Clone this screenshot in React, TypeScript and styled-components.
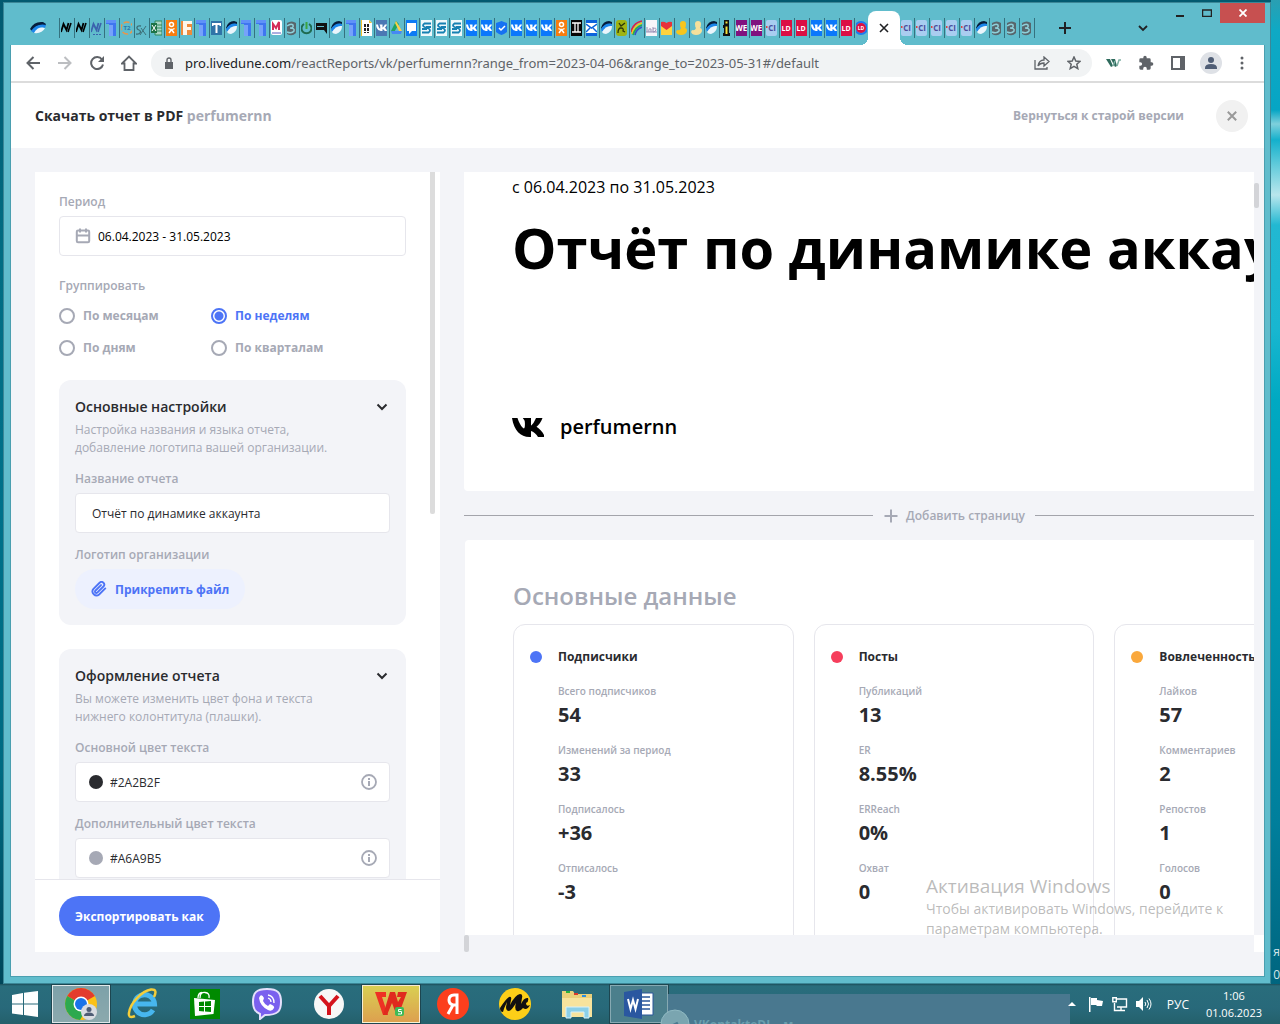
import React from 'react';
import styled, { createGlobalStyle } from 'styled-components';

const ui = "'Open Sans', 'Noto Sans', sans-serif";
const muted = '#a6a9b5';
const accent = '#4d74f6';
const ink = '#2a2b2f';
const line = '#e6e6ec';
const surface = '#f3f4f8';

const Global = createGlobalStyle`
  * { box-sizing: border-box; }
  body { margin: 0; font-family: ${ui}; font-size: 12px; color: ${ink}; }
  button, input { font: inherit; color: inherit; margin: 0; }
  button { border: 0; padding: 0; background: none; cursor: pointer; }
  h1, h2, h3, p, dl, dd, fieldset, legend { margin: 0; padding: 0; border: 0; font-weight: inherit; }
  svg { display: block; flex: none; }
`;

const Desktop = styled.div`
  position: relative;
  height: 100vh;
  display: flex;
  flex-direction: column;
  overflow: hidden;
  background:
    linear-gradient(180deg, #2a9fb2 0, #0fa9c4 30px, #06a5c4 110px, #7fd0dc 124px, #14b0cc 140px, #62cbdb 165px, #b9e6ec 195px, #22b8d2 225px, #18b6d0 330px, #00a9c2 400px, #009fb9 50%, #007f9c 80%, #005f78 100%) right / 9px 100% no-repeat,
    linear-gradient(180deg, #025a70 0, #026d83 25%, #00718a 50%, #006b82 75%, #003f52 100%);
`;

const Window = styled.div`
  flex: 1;
  min-height: 0;
  margin: 2px 9px 0 3px;
  display: flex;
  flex-direction: column;
  border: 1px solid #3b8797;
  background: #60bccc;
`;

const TitleBar = styled.div`
  display: flex;
  height: 42px;
  padding-right: 5px;
`;

const TabStrip = styled.div`
  flex: 1;
  min-width: 0;
  display: flex;
  padding: 8px 0 0 26px;
`;

const PinnedTab = styled.span`
  width: 29px;
  padding-top: 9px;
`;

const Tab = styled.span<{ $end?: boolean }>`
  width: 15px;
  height: 20px;
  margin-top: 7px;
  padding: 2px 1px;
  border-left: ${(p) => (p.$end ? 0 : 1)}px solid #35727f;
  border-right: ${(p) => (p.$end ? 1 : 0)}px solid #35727f;
`;

const ActiveTab = styled.button`
  position: relative;
  width: 32px;
  height: 34px;
  margin-left: -1px;
  display: grid;
  place-items: center;
  border-radius: 8px 8px 0 0;
  background: #fff;
  &::before, &::after {
    content: '';
    position: absolute;
    bottom: 0;
    width: 8px;
    height: 8px;
  }
  &::before { right: 100%; background: radial-gradient(circle at 0 0, transparent 8px, #fff 8px); }
  &::after { left: 100%; background: radial-gradient(circle at 100% 0, transparent 8px, #fff 8px); }
`;

const StripButton = styled.button<{ $gap: number }>`
  width: 20px;
  height: 20px;
  margin: 7px 0 0 ${(p) => p.$gap}px;
  display: grid;
  place-items: center;
`;

const WindowButton = styled.button<{ $wide?: boolean; $red?: boolean }>`
  width: ${(p) => (p.$wide ? 45 : 27)}px;
  height: 20px;
  display: grid;
  place-items: center;
  background: ${(p) => (p.$red ? '#c75050' : 'transparent')};
`;

const Client = styled.div`
  flex: 1;
  min-height: 0;
  margin: 0 5px 6px 6px;
  border: solid #4a9fb0;
  border-width: 0 1px 1px;
  display: flex;
  flex-direction: column;
  background: ${surface};
`;

const Toolbar = styled.div`
  height: 38px;
  display: flex;
  align-items: center;
  padding: 0 12px;
  border-bottom: 2px solid #dcdcdc;
  background: #fff;
`;

const ToolButton = styled.button`
  width: 20px;
  height: 28px;
  margin-right: 12px;
  display: grid;
  place-items: center;
  &:last-child { margin-right: 0; }
`;

const Omnibox = styled.div`
  flex: 1;
  min-width: 0;
  height: 28px;
  margin-right: 12px;
  padding: 0 8px 0 12px;
  display: flex;
  align-items: center;
  border-radius: 14px;
  background: #f1f3f4;
`;

const Address = styled.div`
  flex: 1;
  min-width: 0;
  margin-left: 10px;
  overflow: hidden;
  white-space: nowrap;
  font: 13px/20px 'Noto Sans', sans-serif;
  color: #5f6368;
  b { font-weight: 400; color: #202124; }
`;

const OmniButton = styled.button`
  width: 20px;
  height: 20px;
  margin-left: 12px;
  display: grid;
  place-items: center;
`;

const PageHeader = styled.header`
  height: 65px;
  padding: 0 16px 0 24px;
  display: flex;
  align-items: center;
  background: #fff;
`;

const PageTitle = styled.h1`
  flex: 1;
  font-size: 14px;
  line-height: 20px;
  font-weight: 700;
  span { color: ${muted}; }
`;

const OldVersion = styled.a`
  font-weight: 700;
  color: ${muted};
  text-decoration: none;
`;

const CloseButton = styled.button`
  width: 32px;
  height: 32px;
  margin-left: 32px;
  display: grid;
  place-items: center;
  border-radius: 50%;
  background: #f1f1f1;
`;

const Workspace = styled.main`
  flex: 1;
  min-height: 0;
  display: grid;
  grid-template-columns: 405px minmax(0, 1fr);
  gap: 24px;
  padding: 24px 0 24px 24px;
`;

const Sidebar = styled.aside`
  min-height: 0;
  display: flex;
  flex-direction: column;
  background: #fff;
`;

const SidebarScroll = styled.div`
  flex: 1;
  min-height: 0;
  display: flex;
  justify-content: space-between;
  overflow: hidden;
`;

const Settings = styled.form`
  flex: 1;
  padding: 22px 24px 0;
`;

const SideTrack = styled.div`
  width: 10px;
`;

const SideThumb = styled.div`
  width: 5px;
  height: 342px;
  border-radius: 0 0 2px 2px;
  background: #dcdcdc;
`;

const Label = styled.label`
  display: block;
  margin-bottom: 6px;
  line-height: 16px;
  font-weight: 600;
  color: ${muted};
`;

const Field = styled.div<{ $pad: number }>`
  height: 40px;
  padding: 0 12px 0 ${(p) => p.$pad}px;
  display: flex;
  align-items: center;
  gap: 7px;
  border: 1px solid ${line};
  border-radius: 4px;
  background: #fff;
  input {
    flex: 1;
    min-width: 0;
    padding: 0;
    border: 0;
    outline: 0;
    background: none;
  }
`;

const DateField = styled(Field)`
  color: #000;
`;

const Grouping = styled.fieldset`
  margin-top: 22px;
  legend {
    line-height: 16px;
    font-weight: 600;
    color: ${muted};
  }
`;

const RadioGrid = styled.div`
  display: grid;
  grid-template-columns: 152px 1fr;
  row-gap: 16px;
  margin: 14px 0 24px;
`;

const Radio = styled.label`
  display: flex;
  align-items: center;
  gap: 8px;
  line-height: 16px;
  font-weight: 700;
  color: ${muted};
  input {
    appearance: none;
    width: 16px;
    height: 16px;
    border: 2px solid ${muted};
    border-radius: 50%;
  }
  input:checked {
    border-color: ${accent};
    background: radial-gradient(circle, ${accent} 4px, transparent 5px);
  }
  &:has(input:checked) { color: ${accent}; }
`;

const Group = styled.section`
  margin-bottom: 24px;
  padding: 16px;
  border-radius: 12px;
  background: ${surface};
`;

const GroupHead = styled.div`
  display: flex;
  align-items: center;
  justify-content: space-between;
  h2 {
    font-size: 14px;
    line-height: 22px;
    font-weight: 600;
  }
  button {
    width: 16px;
    height: 16px;
    display: grid;
    place-items: center;
  }
`;

const Hint = styled.p`
  max-width: 280px;
  margin: 3px 0 14px;
  line-height: 18px;
  color: ${muted};
`;

const GroupField = styled.div`
  & + & { margin-top: 14px; }
`;

const Swatch = styled.span<{ $color: string }>`
  width: 14px;
  height: 14px;
  border-radius: 50%;
  background: ${(p) => p.$color};
`;

const InfoButton = styled.button`
  width: 16px;
  height: 16px;
`;

const AttachButton = styled.button`
  height: 40px;
  padding: 0 16px;
  display: flex;
  align-items: center;
  gap: 8px;
  border-radius: 20px;
  background: #edf1fe;
  font-weight: 700;
  color: ${accent};
`;

const SidebarFooter = styled.div`
  height: 73px;
  padding: 16px 24px;
  border-top: 1px solid ${line};
`;

const ExportButton = styled.button`
  height: 40px;
  padding: 0 16px;
  border-radius: 20px;
  background: ${accent};
  font-weight: 700;
  color: #fff;
`;

const Preview = styled.section`
  min-height: 0;
  display: grid;
  grid-template: minmax(0, 1fr) 17px / minmax(0, 1fr) 10px;
`;

const Sheets = styled.div`
  overflow: hidden;
`;

const VTrack = styled.div`
  padding-top: 11px;
  &::before {
    content: '';
    display: block;
    width: 5px;
    height: 25px;
    border-radius: 2px;
    background: #d3d4d8;
  }
`;

const HTrack = styled.div`
  &::before {
    content: '';
    display: block;
    width: 5px;
    height: 17px;
    border-radius: 2px;
    background: #d3d4d8;
  }
`;

const Corner = styled.div`
  background: #fff;
`;

const Cover = styled.article`
  width: 980px;
  height: 319px;
  padding: 3px 48px 48px;
  display: flex;
  flex-direction: column;
  border-radius: 0 0 4px 4px;
  background: #fff;
  color: #000;
`;

const CoverPeriod = styled.p`
  font-size: 16px;
  line-height: 24px;
`;

const CoverTitle = styled.h2`
  margin-top: 10px;
  font-size: 56px;
  line-height: 76px;
  font-weight: 700;
  white-space: nowrap;
`;

const CoverAccount = styled.div`
  margin-top: auto;
  display: flex;
  align-items: center;
  gap: 16px;
  font-size: 20px;
  line-height: 32px;
  font-weight: 600;
`;

const AddPage = styled.button`
  width: 980px;
  height: 49px;
  display: flex;
  align-items: center;
  gap: 10px;
  font-weight: 600;
  color: ${muted};
  &::before, &::after {
    content: '';
    flex: 1;
    height: 1px;
    background: #a3a4ab;
  }
  span { display: flex; align-items: center; gap: 7px; }
`;

const Sheet = styled.article`
  width: 980px;
  margin-left: 1px;
  padding: 40px 50px 48px 48px;
  border-radius: 4px;
  background: #fff;
`;

const SheetTitle = styled.h2`
  margin-bottom: 12px;
  font-size: 24px;
  line-height: 32px;
  font-weight: 600;
  color: ${muted};
`;

const Cards = styled.div`
  display: grid;
  grid-template-columns: repeat(3, 1fr);
  gap: 20px;
`;

const Card = styled.section`
  padding: 23px 16px 40px;
  border: 1px solid ${line};
  border-radius: 12px;
`;

const CardTitle = styled.h3<{ $dot: string }>`
  display: flex;
  align-items: center;
  gap: 16px;
  font-size: 12px;
  line-height: 18px;
  font-weight: 700;
  &::before {
    content: '';
    width: 12px;
    height: 12px;
    border-radius: 50%;
    background: ${(p) => p.$dot};
  }
`;

const Metrics = styled.dl`
  display: grid;
  row-gap: 11px;
  margin: 17px 0 0 28px;
  dt {
    font-size: 10px;
    line-height: 16px;
    font-weight: 600;
    color: ${muted};
  }
  dd {
    font-size: 20px;
    line-height: 32px;
    font-weight: 700;
  }
`;

const Watermark = styled.div`
  position: absolute;
  left: 926px;
  top: 873px;
  width: 320px;
  font-size: 14px;
  line-height: 20px;
  color: rgba(120, 120, 120, 0.5);
  pointer-events: none;
  strong {
    display: block;
    font-size: 19px;
    line-height: 26px;
    font-weight: 400;
  }
`;

const ShortcutCaption = styled.div`
  position: absolute;
  right: 0;
  top: 940px;
  width: 8px;
  overflow: hidden;
  direction: rtl;
  line-height: 23px;
  color: #d5e6ea;
`;

const Taskbar = styled.footer`
  position: relative;
  height: 40px;
  display: flex;
  align-items: center;
  background: linear-gradient(180deg, #1c4f5b 0, #296d7c 2px, #28697a 60%, #24606b 100%);
`;

const StartButton = styled.button`
  width: 50px;
  height: 40px;
  padding-left: 12px;
`;

const TaskButton = styled.button<{ $tone?: string; $soft?: boolean }>`
  width: 58px;
  height: 38px;
  margin: 1px 2px;
  display: grid;
  place-items: center;
  border: 1px solid ${(p) => (p.$tone ? (p.$soft ? '#86a9b2' : 'rgba(255,255,255,.75)') : 'transparent')};
  outline: 1px solid ${(p) => (p.$tone ? '#1d4650' : 'transparent')};
  background: ${(p) => p.$tone ?? 'none'};
`;

const MediaToast = styled.div`
  position: absolute;
  left: 630px;
  right: 210px;
  bottom: 0;
  height: 30px;
  padding-left: 30px;
  display: flex;
  align-items: flex-start;
  gap: 4px;
  overflow: hidden;
  background: linear-gradient(90deg, transparent 38px, #49788f 38px);
  font-weight: 700;
  line-height: 16px;
  color: #6a9fae;
  svg { margin-top: 15px; }
  span { margin-top: 23px; }
`;

const Tray = styled.div`
  position: relative;
  margin-left: auto;
  padding-right: 18px;
  display: flex;
  align-items: center;
  line-height: 17px;
  color: #fff;
`;

const TrayButton = styled.button<{ $w: number }>`
  width: ${(p) => p.$w}px;
  height: 38px;
  display: grid;
  place-items: center;
`;

const Clock = styled.time`
  margin-left: 6px;
  font-size: 11px;
  text-align: center;
`;

/* Favicons, all on an 11 x 16 clipped canvas */
type FavKind =
  | 'n' | 'nb' | 'doc' | 't2' | 's' | 'xl' | 'ok' | 'f' | 't' | 'swoosh' | 'm' | 'z' | 'power' | 'talk' | 'wb'
  | 'vkDim' | 'drive' | 'chat' | 'sber' | 'vk' | 'badge' | 'ii' | 'mail' | 'green' | 'rainbow' | 'lab' | 'heart'
  | 'duck' | 'duckPale' | 'i' | 'we' | 'pci' | 'ld' | 'ring';

const vkPath = 'M0 4.500h2c.4 2 1.200 3.800 2.200 4.200V6L3.500 4.500h3V7.500C7.500 7 8.300 5.800 8.800 4.500H11c-.4 1.300-1.300 2.500-2.300 3.300 1 .7 1.900 1.700 2.300 3.200H8.800C8.300 10 7.500 9.300 6.500 9v2H6C2.600 11 .3 9 0 4.500z';

const Word: React.FC<{ x?: number; y?: number; size?: number; fill?: string; children: string }> = ({ x = 5, y = 11, size = 8, fill = '#fff', children }) => (
  <text x={x} y={y} fontSize={size} fill={fill} fontWeight="700" textAnchor="middle" fontFamily="Open Sans, sans-serif">{children}</text>
);

const favArt = (k: FavKind): React.ReactNode => {
  switch (k) {
    case 'n':
    case 'nb': {
      const c = k === 'n' ? '#000' : '#3b62ad';
      return (<><path d="M0 12 2.500 4l3 6L7.500 3" fill="none" stroke={c} strokeWidth="1.800" /><path d="m7 12 3-9" stroke={c} strokeWidth="1.600" />{k === 'nb' && <path d="M2 14.500h8" stroke={c} strokeDasharray="2 1" />}</>);
    }
    case 'doc':
      return (<><path d="M0 0h10v16H3V4H0z" fill="#3f76f0" /><path d="M0 0h10v3H0z" fill="#5f92f8" /><path d="M3 5h4v11H3z" fill="#76a2fa" /></>);
    case 't2':
      return (<><circle cx="6" cy="8" r="6" fill="none" stroke="#e9954a" strokeWidth="1.500" strokeDasharray="6 2" /><Word x={6} y={10} size={6} fill="#2a78a8">T2</Word></>);
    case 's':
      return (<><path d="M5 6C0 5 0 9 3 10s1 5-3 4" fill="none" stroke="#3d6f78" strokeWidth="1.300" /><path d="m4 15 6-9M5 8l5 7" stroke="#3d6f78" /></>);
    case 'xl':
      return (<><path d="M4 1h7v14H4z" fill="#a8d5c4" stroke="#2f8a5c" /><path d="M5 5h6M5 8h6M5 11h6" stroke="#2f8a5c" /><path d="M0 3h6v10H0z" fill="#1f7346" /><path d="m1 5 4 6m0-6-4 6" stroke="#fff" /></>);
    case 'ok':
      return (<><path d="M0 0h11v16H0z" fill="#f77d0f" /><circle cx="5.500" cy="4.500" r="2" fill="none" stroke="#fff" strokeWidth="1.500" /><path d="M2.500 8.500q3 2 6 0M5.500 9.500 3 13m2.500-3.500L8 13" fill="none" stroke="#fff" strokeWidth="1.500" /></>);
    case 'f':
      return (<><path d="M0 1h11v14H0z" fill="#ee8a3a" /><path d="M2 1h9v3H6v3h4v3H6v5H2z" fill="#fff6ea" /></>);
    case 't':
      return (<><path d="M0 1h11v14H0z" fill="#2f74a8" /><path d="M1 3h9v3H9L8 5H6.500v8H4.500V5H3L2 6H1z" fill="#fff" /></>);
    case 'swoosh':
      return (<><path d="M0 8Q2 1 8 1l3 1v2Q5 3 0 9z" fill="#061d3c" /><path d="M0 9Q5 2 11 4v2Q5 6 1 12z" fill="#1d86ea" /><path d="M1 12Q5 5 11 6q0 6-6 8-3 0-4-2z" fill="#eaf5fc" /></>);
    case 'm':
      return (<><rect width="11" height="15" rx="2" fill="#fff" /><path d="M2 10V4l3 4 3-6v8" fill="none" stroke="#d32d58" strokeWidth="2" /><path d="M1 13h9" stroke="#5b5fc0" /></>);
    case 'z':
      return (<><path d="M1 3q5-3 9 0v10q-4 4-9 1z" fill="#58666c" /><path d="M1 6q4-3 6-1 1 3-3 3 5 0 4 3-2 3-7 1" fill="none" stroke="#8ed0da" strokeWidth="1.500" /></>);
    case 'power':
      return (<><path d="M3 4a5 5 0 1 0 5 0" fill="none" stroke="#1f6a50" strokeWidth="2" /><path d="M5.500 2v7" stroke="#3aa53f" strokeWidth="2" /></>);
    case 'talk':
      return (<path d="M0 3h11v11L8 10H0zM1 6v1h7V6z" fill="#111" fillRule="evenodd" />);
    case 'wb':
      return (<><path d="M0 0h8l3 3v13H0z" fill="#fff" /><path d="M8 0v3h3zM0 0v16h1V0z" fill="#efc130" /><path d="M4 4v9M7 4v9" stroke="#222" strokeWidth="2" strokeDasharray="3 1" /></>);
    case 'vkDim':
    case 'vk':
      return (<><path d="M0 0h11v16H0z" fill={k === 'vk' ? '#0b78fb' : '#4b78b4'} /><path d={vkPath} fill="#fff" /></>);
    case 'drive':
      return (<><path d="M5 1 0 11l2 3L8 4z" fill="#1fa463" /><path d="m5 1 6 10H8L4 3z" fill="#ffcf48" /><path d="M0 11h11l-1 3H1z" fill="#4688f4" /></>);
    case 'chat':
      return (<><path d="M0 0h11v16H0z" fill="#0d7bf5" /><path d="M1 3h9v8H6l-3 3v-3H1z" fill="#fff" /></>);
    case 'sber':
      return (<><path d="M0 0h11v16H0z" fill="#eef8fb" /><path d="M10 3.500H3.500q-3 2 0 3.500l4 1.500q3 1.500 0 4H1M10 7H5M1 9h5" fill="none" stroke="#1580b2" strokeWidth="1.800" /></>);
    case 'badge':
      return (<><path d="M5.500 1 8 2l3 1v9l-3 2-2.500 1L3 14l-3-2V3l3-1z" fill="#1672f2" /><path d="m3 8 2 2 4-4" fill="none" stroke="#fff" strokeWidth="1.500" /></>);
    case 'ii':
      return (<><path d="M0 0h11v16H0z" fill="#060606" /><path d="M1 3h9M1 12h9M4 3v9M7 3v9" stroke="#fff" strokeWidth="1.300" /></>);
    case 'mail':
      return (<><path d="M0 0h11v16H0z" fill="#0c63dc" /><path d="M0 3h11v10H0z" fill="#fff" /><path d="m0 4 5.500 4L11 4M0 12l4-4m7 4L7 8" fill="none" stroke="#0c63dc" strokeWidth="1.500" /></>);
    case 'green':
      return (<><rect width="11" height="16" rx="3" fill="#9fb312" /><path d="m3 3 2 3 4-3M2 13q0-5 3-5t2 3l2 1" fill="none" stroke="#2c3607" strokeWidth="1.300" /></>);
    case 'rainbow':
      return (<g fill="none" strokeWidth="1.700"><path d="M0 12Q2 3 11 1" stroke="#d8224c" /><path d="M1 14Q3 5 11 3" stroke="#f5c518" /><path d="M2 15q2-8 9-10" stroke="#20ad52" /><path d="M4 15q1-6 7-8" stroke="#3554c7" /></g>);
    case 'lab':
      return (<><path d="M0 0h11v16H0z" fill="#f6f5fa" /><path d="M1 12V7m2 5q-1-4 2-3v3m2-5v5q3 0 3-2.500T7 9M0 12h11" fill="none" stroke="#9a8fb5" /></>);
    case 'heart':
      return (<><path d="M0 3h11v12H0z" fill="#ffd33e" /><path d="M5.500 10 0 6V2q3-1 5.500 1Q8 1 11 2v4z" fill="#e7323c" /></>);
    case 'duck':
    case 'duckPale':
      return (<path d="M4 4q0-3 3-3t3 3-1 4q2 0 2 3-1 4-6 4-4 0-5-3l1-2q3 1 4-2-1-1-1-4z" fill={k === 'duck' ? '#f6c51c' : '#f5e09b'} />);
    case 'i':
      return (<><path d="M3 0h5v5H3zM2 5h6v8h1v3H2v-3h1V8H2z" fill="#111" /><path d="M4.500 1.500h2v2h-2zM4.500 6.500h2V14h-2z" fill="#f5e33c" /></>);
    case 'we':
      return (<><path d="M0 0h11v16H0z" fill="#80127f" /><Word size={8}>WE</Word></>);
    case 'pci':
      return (<><rect width="11" height="16" rx="2" fill="#a9cdf0" /><Word x={6} size={8} fill="#4b4c9b">CI</Word><path d="M0 6h1.500v2H0" fill="#dd4546" /></>);
    case 'ld':
      return (<><path d="M0 0h11v16H0z" fill="#dc0f44" /><Word size={7}>LD</Word></>);
    case 'ring':
      return (<><circle cx="5" cy="8" r="6" fill="none" stroke="#1e78f0" strokeWidth="2" /><circle cx="5" cy="8" r="5" fill="#dc0f44" /><Word size={5} y={10}>LD</Word></>);
  }
};

const Fav: React.FC<{ k: FavKind }> = ({ k }) => <svg width="11" height="16" viewBox="0 0 11 16">{favArt(k)}</svg>;

const before: FavKind[] = [
  'n', 'n', 'nb', 'doc', 't2', 's', 'xl', 'ok', 'f', 'doc', 't', 'swoosh', 'doc', 'doc', 'm', 'z', 'power', 'talk',
  'swoosh', 'doc', 'wb', 'vkDim', 'drive', 'chat', 'sber', 'sber', 'sber', 'vk', 'vk', 'badge', 'vk', 'vk', 'vk', 'ok',
  'ii', 'mail', 'swoosh', 'green', 'rainbow', 'lab', 'heart', 'duck', 'duckPale', 'swoosh', 'i', 'we', 'we', 'pci',
  'ld', 'ld', 'vk', 'vk', 'ld',
];
const after: FavKind[] = ['pci', 'pci', 'pci', 'pci', 'pci', 'swoosh', 'z', 'z', 'z'];

const Chevron: React.FC = () => (
  <svg width="12" height="8" viewBox="0 0 12 8"><path d="m1.500 1.500 4.500 4.500 4.500-4.500" fill="none" stroke={ink} strokeWidth="2" /></svg>
);

const Info: React.FC = () => (
  <svg width="16" height="16" viewBox="0 0 16 16"><circle cx="8" cy="8" r="7" fill="none" stroke={muted} strokeWidth="1.800" /><path d="M8 7v5M8 4v2" stroke={muted} strokeWidth="2" /></svg>
);

const groups = [
  { id: 'month', text: 'По месяцам' },
  { id: 'week', text: 'По неделям' },
  { id: 'day', text: 'По дням' },
  { id: 'quarter', text: 'По кварталам' },
];

const colors = [
  { id: 'main-color', text: 'Основной цвет текста', value: '#2A2B2F' },
  { id: 'extra-color', text: 'Дополнительный цвет текста', value: '#A6A9B5' },
];

const cards = [
  { title: 'Подписчики', dot: '#4d74f6', rows: [['Всего подписчиков', '54'], ['Изменений за период', '33'], ['Подписалось', '+36'], ['Отписалось', '-3']] },
  { title: 'Посты', dot: '#f63e5c', rows: [['Публикаций', '13'], ['ER', '8.55%'], ['ERReach', '0%'], ['Охват', '0']] },
  { title: 'Вовлеченность', dot: '#faa83c', rows: [['Лайков', '57'], ['Комментариев', '2'], ['Репостов', '1'], ['Голосов', '0']] },
];

const gray = { fill: 'none', stroke: '#5f6368', strokeWidth: 2 };

const BrowserTabs: React.FC = () => (
  <TitleBar>
    <TabStrip>
      <PinnedTab>
        <svg width="17" height="16" viewBox="0 0 17 16"><path d="M0 9Q4 1 13 2l3 2-1 2Q8 3 2 11z" fill="#061d3c" /><path d="M1 11Q7 3 16 5l-1 3Q9 6 4 13z" fill="#1d86ea" /><path d="M4 13q4-7 11-5-3 6-11 5z" fill="#eaf5fc" /></svg>
      </PinnedTab>
      {before.map((k, i) => <Tab key={i}><Fav k={k} /></Tab>)}
      <Tab><Fav k="ring" /></Tab>
      <ActiveTab aria-label="Закрыть вкладку"><svg width="10" height="10" viewBox="0 0 10 10"><path d="m1 1 8 8m0-8L1 9" stroke="#202124" strokeWidth="1.600" /></svg></ActiveTab>
      {after.map((k, i) => <Tab key={i} $end><Fav k={k} /></Tab>)}
      <StripButton $gap={20} aria-label="Новая вкладка"><svg width="12" height="12" viewBox="0 0 12 12"><path d="M6 0v12M0 6h12" stroke="#202124" strokeWidth="2" /></svg></StripButton>
      <StripButton $gap={58} aria-label="Поиск вкладок"><svg width="10" height="7" viewBox="0 0 10 7"><path d="m1 1 4 4 4-4" fill="none" stroke="#202124" strokeWidth="1.800" /></svg></StripButton>
    </TabStrip>
    <WindowButton aria-label="Свернуть"><svg width="8" height="10" viewBox="0 0 8 10"><path d="M0 7h8v2H0z" fill="#222" /></svg></WindowButton>
    <WindowButton aria-label="Развернуть"><svg width="10" height="8" viewBox="0 0 10 8"><path d="M.5 1v6.500h9V1M0 1h10" fill="none" stroke="#222" strokeWidth="1.500" /></svg></WindowButton>
    <WindowButton $wide $red aria-label="Закрыть"><svg width="8" height="8" viewBox="0 0 8 8"><path d="m.5.5 7 7m0-7-7 7" stroke="#fff" strokeWidth="1.800" /></svg></WindowButton>
  </TitleBar>
);

const BrowserToolbar: React.FC = () => (
  <Toolbar>
    <ToolButton aria-label="Назад"><svg width="14" height="14" viewBox="0 0 14 14"><path d="M14 7H1.500M7.500 1l-6 6 6 6" {...gray} /></svg></ToolButton>
    <ToolButton aria-label="Вперёд"><svg width="14" height="14" viewBox="0 0 14 14"><path d="M0 7h12.500M6.500 1l6 6-6 6" {...gray} stroke="#bcbec1" /></svg></ToolButton>
    <ToolButton aria-label="Обновить"><svg width="14" height="14" viewBox="0 0 14 14"><path d="M12 3.500A6 6 0 1 0 13 8.500" {...gray} /><path d="M14 0v6H8z" fill="#5f6368" /></svg></ToolButton>
    <ToolButton aria-label="Главная"><svg width="16" height="16" viewBox="0 0 16 16"><path d="M1 8.500 8 1.500l7 7H12.500V15h-9V8.500z" {...gray} strokeWidth={1.800} /></svg></ToolButton>
    <Omnibox>
      <svg width="12" height="12" viewBox="0 0 12 12"><path d="M2 5h8v7H2z" fill="#5f6368" /><path d="M4 5V3a2 2 0 0 1 4 0v2" fill="none" stroke="#5f6368" strokeWidth="1.400" /></svg>
      <Address><b>pro.livedune.com</b>/reactReports/vk/perfumernn?range_from=2023-04-06&amp;range_to=2023-05-31#/default</Address>
      <OmniButton aria-label="Поделиться"><svg width="16" height="14" viewBox="0 0 16 14"><path d="M1 4v9h12v-2M4 10q1-6 6-6V1l5 4.500-5 4.500V7Q6 7 4 10z" fill="none" stroke="#5f6368" strokeWidth="1.300" /></svg></OmniButton>
      <OmniButton aria-label="Добавить в закладки"><svg width="14" height="14" viewBox="0 0 14 14"><path d="m7 1 1.800 4 4.300.4-3.300 2.900 1 4.300L7 10.300l-3.800 2.300 1-4.300L.9 5.400 5.200 5z" fill="none" stroke="#5f6368" strokeWidth="1.500" /></svg></OmniButton>
    </Omnibox>
    <ToolButton aria-label="Расширение"><svg width="16" height="10" viewBox="0 0 16 10"><path d="M0 1h4l3 7-2 1zM5 1h4l2 7-2 1z" fill="#2f6b5d" /><path d="m7 8 2-5m2 5 2-6h2" fill="none" stroke="#7fb0a4" strokeWidth="1.500" /></svg></ToolButton>
    <ToolButton aria-label="Расширения"><svg width="16" height="16" viewBox="0 0 24 24"><path d="M20.500 11H19V7a2 2 0 0 0-2-2h-4V3.500a2.500 2.500 0 0 0-5 0V5H4a2 2 0 0 0-2 2v3.800h1.500a2.700 2.700 0 0 1 0 5.400H2V20a2 2 0 0 0 2 2h3.800v-1.500a2.700 2.700 0 0 1 5.400 0V22H17a2 2 0 0 0 2-2v-4h1.500a2.500 2.500 0 0 0 0-5z" fill="#5f6368" /></svg></ToolButton>
    <ToolButton aria-label="Боковая панель"><svg width="14" height="14" viewBox="0 0 14 14"><path d="M1 1h12v12H1z" {...gray} /><path d="M9 1h4v12H9z" fill="#5f6368" /></svg></ToolButton>
    <ToolButton aria-label="Профиль"><svg width="22" height="22" viewBox="0 0 22 22"><circle cx="11" cy="11" r="11" fill="#dee1e6" /><circle cx="11" cy="8" r="3" fill="#4f5d75" /><path d="M5 16q0-4 6-4t6 4v1H5z" fill="#4f5d75" /></svg></ToolButton>
    <ToolButton aria-label="Меню"><svg width="4" height="14" viewBox="0 0 4 14"><circle cx="2" cy="2" r="1.500" fill="#5f6368" /><circle cx="2" cy="7" r="1.500" fill="#5f6368" /><circle cx="2" cy="12" r="1.500" fill="#5f6368" /></svg></ToolButton>
  </Toolbar>
);

const SettingsPanel: React.FC = () => (
  <Sidebar>
    <SidebarScroll>
      <Settings>
        <Label htmlFor="period">Период</Label>
        <DateField $pad={15}>
          <svg width="16" height="16" viewBox="0 0 16 16"><path d="M3 2.500h10q1.200 0 1.200 1.200v9.300q0 1.200-1.200 1.200H3q-1.200 0-1.200-1.200V3.700Q1.800 2.500 3 2.500zM2 7.500h12M5 .5v4M11 .5v4" fill="none" stroke={muted} strokeWidth="2" /></svg>
          <input id="period" defaultValue="06.04.2023 - 31.05.2023" />
        </DateField>
        <Grouping>
          <legend>Группировать</legend>
          <RadioGrid>
            {groups.map((g) => (
              <Radio key={g.id}><input type="radio" name="grouping" value={g.id} defaultChecked={g.id === 'week'} />{g.text}</Radio>
            ))}
          </RadioGrid>
        </Grouping>
        <Group>
          <GroupHead><h2>Основные настройки</h2><button type="button" aria-label="Свернуть основные настройки"><Chevron /></button></GroupHead>
          <Hint>Настройка названия и языка отчета, добавление логотипа вашей организации.</Hint>
          <GroupField>
            <Label htmlFor="name">Название отчета</Label>
            <Field $pad={16}><input id="name" defaultValue="Отчёт по динамике аккаунта" /></Field>
          </GroupField>
          <GroupField>
            <Label htmlFor="logo">Логотип организации</Label>
            <AttachButton id="logo" type="button">
              <svg width="16" height="16" viewBox="0 0 24 24"><path d="m21.400 11.100-9.200 9.100a6 6 0 0 1-8.500-8.400l9.200-9.200a4 4 0 0 1 5.700 5.700l-9.200 9.100a2 2 0 0 1-2.900-2.800l8.500-8.500" fill="none" stroke={accent} strokeWidth="2.800" strokeLinecap="round" /></svg>
              Прикрепить файл
            </AttachButton>
          </GroupField>
        </Group>
        <Group>
          <GroupHead><h2>Оформление отчета</h2><button type="button" aria-label="Свернуть оформление отчета"><Chevron /></button></GroupHead>
          <Hint>Вы можете изменить цвет фона и текста нижнего колонтитула (плашки).</Hint>
          {colors.map((c) => (
            <GroupField key={c.id}>
              <Label htmlFor={c.id}>{c.text}</Label>
              <Field $pad={13}>
                <Swatch $color={c.value} />
                <input id={c.id} defaultValue={c.value} />
                <InfoButton type="button" aria-label="Подсказка"><Info /></InfoButton>
              </Field>
            </GroupField>
          ))}
        </Group>
      </Settings>
      <SideTrack><SideThumb /></SideTrack>
    </SidebarScroll>
    <SidebarFooter><ExportButton>Экспортировать как</ExportButton></SidebarFooter>
  </Sidebar>
);

const ReportPreview: React.FC = () => (
  <Preview>
    <Sheets>
      <Cover>
        <CoverPeriod>с 06.04.2023 по 31.05.2023</CoverPeriod>
        <CoverTitle>Отчёт по динамике аккаунта</CoverTitle>
        <CoverAccount>
          <svg width="32" height="19" viewBox="0 0 32 19"><path d="M0 0h5.500C7 4.500 9.500 9.500 12 10.500c.9-.5 1-3 .9-5.500C12.800 2.500 12.300 1.500 10.800.8L11.500 0H19v7.500c1.500-.5 3.500-4 5-7.500h6.500c-1.300 4-3.800 7-6 8.800C27 10.500 30.500 13.800 32 17v2h-6c-1.500-2.800-4.500-5.500-7-6v6h-1.500C8.500 19 2 12.500 0 0z" fill="#000" /></svg>
          perfumernn
        </CoverAccount>
      </Cover>
      <AddPage>
        <span><svg width="16" height="16" viewBox="0 0 16 16"><path d="M8 1.500v13M1.500 8h13" stroke={muted} strokeWidth="2" /></svg>Добавить страницу</span>
      </AddPage>
      <Sheet>
        <SheetTitle>Основные данные</SheetTitle>
        <Cards>
          {cards.map((c) => (
            <Card key={c.title}>
              <CardTitle $dot={c.dot}>{c.title}</CardTitle>
              <Metrics>
                {c.rows.map(([name, value]) => <div key={name}><dt>{name}</dt><dd>{value}</dd></div>)}
              </Metrics>
            </Card>
          ))}
        </Cards>
      </Sheet>
    </Sheets>
    <VTrack />
    <HTrack />
    <Corner />
  </Preview>
);

const WindowsTaskbar: React.FC = () => (
  <Taskbar>
    <StartButton aria-label="Пуск"><svg width="26" height="26" viewBox="0 0 26 26"><path d="M0 4l11-2v10.500H0zM12 1.800 26 0v12.500H12zM0 13.500h11V24L0 22.500zM12 13.500h14V26l-14-2z" fill="#fff" /></svg></StartButton>
    <TaskButton $tone="linear-gradient(#7da1a9, #8ba9ad)" aria-label="Chrome">
      <svg width="32" height="32" viewBox="0 0 32 32"><circle cx="16" cy="16" r="16" fill="#fbc116" /><path d="M16 16 2.200 8A16 16 0 0 1 29.800 8z" fill="#e33b2e" /><path d="M2.200 8A16 16 0 0 0 15 32l7-12-6-4z" fill="#2da94f" /><circle cx="16" cy="16" r="7.500" fill="#fff" /><circle cx="16" cy="16" r="6" fill="#1a73e8" /><circle cx="24" cy="24" r="8" fill="#d9dce1" /><circle cx="24" cy="21.500" r="2.500" fill="#4f5d75" /><path d="M19 28q0-3.500 5-3.500t5 3.500z" fill="#4f5d75" /></svg>
    </TaskButton>
    <TaskButton aria-label="Internet Explorer">
      <svg width="32" height="32" viewBox="0 0 32 32"><path d="M26 22a10 10 0 1 1 1.500-6H9" fill="none" stroke="#47b6ee" strokeWidth="5" /><path d="M27 9q4-8-3-7.500C15 3 3 15 2 25q-1 6 6 3" fill="none" stroke="#f4cd3a" strokeWidth="2.500" /></svg>
    </TaskButton>
    <TaskButton aria-label="Магазин">
      <svg width="30" height="30" viewBox="0 0 30 30"><path d="M0 0h30v30H0z" fill="#008a00" /><path d="M4 9l21 2-1.500 14L5 27z" fill="#fff" /><path d="M10 9q0-6 5-5.500T19 9M8 9q0-5 4-5.500" fill="none" stroke="#fff" strokeWidth="1.300" /><path d="m9 13 5-.5V17H9zm6-.6 6-.4v5h-6zM9 18h5v4.500L9 22zm6 0h6v5l-6-.5z" fill="#008a00" /></svg>
    </TaskButton>
    <TaskButton aria-label="Viber">
      <svg width="32" height="32" viewBox="0 0 32 32"><path d="M16 1C5 1 2 5 2 14c0 7 2 10 7 12v5l5-4c13 0 16-4 16-13S27 1 16 1z" fill="#7a60ee" stroke="#e5e0fb" strokeWidth="2" /><path d="M9 8q2-2 4 2l-1 3q2 4 5 5l2-2q5 2 4 4-2 4-6 2Q9 18 8 10z" fill="#fff" /><path d="M17 7q6 1 6 8M17 10q3 1 3 4" fill="none" stroke="#fff" strokeWidth="1.300" /></svg>
    </TaskButton>
    <TaskButton aria-label="Яндекс Браузер">
      <svg width="30" height="30" viewBox="0 0 30 30"><circle cx="15" cy="15" r="15" fill="#f7f7f7" /><path d="m6 7 9 10v9m9-19-9 10" fill="none" stroke="#d4131c" strokeWidth="4" /></svg>
    </TaskButton>
    <TaskButton $tone="linear-gradient(#d9cf52, #dda04f)" aria-label="WPS Office">
      <svg width="32" height="28" viewBox="0 0 32 28"><path d="M0 2h11v5H7l6 18H8z" fill="#ee3124" /><path d="M8 25 15 2h5l3 10 3-5h-4l1-5h9l-7 19h-5l-3-8-5 12z" fill="#e02a1e" /><rect x="20" y="17" width="9" height="9" rx="2" fill="#3fba57" /><path d="M26.500 19.500h-3v2h3v2.500h-3.500" fill="none" stroke="#fff" /></svg>
    </TaskButton>
    <TaskButton aria-label="Яндекс">
      <svg width="32" height="32" viewBox="0 0 32 32"><circle cx="16" cy="16" r="16" fill="#fc3f1d" /><path d="M20 26V7h-3q-5 0-5 5 0 4 4 5h3M16 17l-5 9" fill="none" stroke="#fff" strokeWidth="3" /></svg>
    </TaskButton>
    <TaskButton aria-label="Яндекс Музыка">
      <svg width="32" height="32" viewBox="0 0 32 32"><circle cx="16" cy="16" r="16" fill="#fdcf18" /><path d="M1 20q5-8 9-11 3-1 2 3l-1 5q5-10 10-11 3 0 2 4l-1 6q3-7 7-6 1 4-2 5 0 4 4 2-3 6-7 3-3 4-6 3-3-2-1-8-4 7-7 8-3 0-3-4l1-5q-3 6-4 10-3 0-3-4z" fill="#111" /></svg>
    </TaskButton>
    <TaskButton aria-label="Проводник">
      <svg width="32" height="30" viewBox="0 0 32 30"><path d="M1 2h11l2 3h17v23H1z" fill="#ead07a" /><path d="M1 9h30v19H1z" fill="#f7e39d" /><path d="M5 2h4v2H5z" fill="#2bb13c" /><path d="M13 4h4v2h-4z" fill="#d83a2c" /><path d="M21 6h4v2h-4z" fill="#2a8fe0" /><path d="M5 29V18h23v11h-5v-6H10v6z" fill="#8cd0e8" stroke="#d7f1fa" /></svg>
    </TaskButton>
    <TaskButton $tone="#4b7f8c" $soft aria-label="Word">
      <svg width="30" height="30" viewBox="0 0 30 30"><path d="M15 4h14v22H15z" fill="#fff" stroke="#2b579a" /><path d="M18 8h8M18 12h8M18 16h8M18 20h8" stroke="#2b579a" strokeWidth="1.500" /><path d="M0 3 18 0v30L0 27z" fill="#2a57a0" /><path d="m4 10 2.500 10L9 11l2.500 9L14 10" fill="none" stroke="#fff" strokeWidth="2" /></svg>
    </TaskButton>
    <MediaToast>
      <svg width="30" height="30" viewBox="0 0 30 30"><circle cx="15" cy="15" r="14" fill="#7aa5b0" stroke="#8fb9c2" /><path d="m10 18 8-4" stroke="#49788f" strokeWidth="3" /></svg>
      <span>VKontakteDJ .. м</span>
    </MediaToast>
    <Tray>
      <TrayButton $w={24} aria-label="Скрытые значки"><svg width="8" height="4" viewBox="0 0 8 4"><path d="m4 0 4 4H0z" fill="#fff" /></svg></TrayButton>
      <TrayButton $w={24} aria-label="Центр поддержки"><svg width="16" height="15" viewBox="0 0 16 15"><path d="M1 0h1.500v15H1zM3 1h6v2l6 1-1 5H9L8 8H3z" fill="#fff" /></svg></TrayButton>
      <TrayButton $w={24} aria-label="Сеть"><svg width="16" height="15" viewBox="0 0 16 15"><path d="M5 2h9.500v8H5M2.500 6v7.500H7M9 10v3.500M6 13.500h7M.8.8h3.500v4H.8z" fill="none" stroke="#fff" strokeWidth="1.400" /></svg></TrayButton>
      <TrayButton $w={24} aria-label="Громкость"><svg width="16" height="14" viewBox="0 0 16 14"><path d="M0 4h3l4-4v14l-4-4H0z" fill="#fff" /><path d="M9 5q1.500 2 0 4M11 3q3 4 0 8M13 1.500q4 5.500 0 11" fill="none" stroke="#fff" /></svg></TrayButton>
      <TrayButton $w={44}>РУС</TrayButton>
      <Clock>1:06<br />01.06.2023</Clock>
    </Tray>
  </Taskbar>
);

export default function App() {
  return (
    <Desktop>
      <Global />
      <ShortcutCaption>я<br />0</ShortcutCaption>
      <Window>
        <BrowserTabs />
        <Client>
          <BrowserToolbar />
          <PageHeader>
            <PageTitle>Скачать отчет в PDF <span>perfumernn</span></PageTitle>
            <OldVersion href="#old">Вернуться к старой версии</OldVersion>
            <CloseButton aria-label="Закрыть отчет"><svg width="10" height="10" viewBox="0 0 10 10"><path d="m.8.8 8.400 8.400m0-8.400L.8 9.200" stroke="#999" strokeWidth="2" /></svg></CloseButton>
          </PageHeader>
          <Workspace>
            <SettingsPanel />
            <ReportPreview />
          </Workspace>
        </Client>
      </Window>
      <Watermark><strong>Активация Windows</strong>Чтобы активировать Windows, перейдите к параметрам компьютера.</Watermark>
      <WindowsTaskbar />
    </Desktop>
  );
}
